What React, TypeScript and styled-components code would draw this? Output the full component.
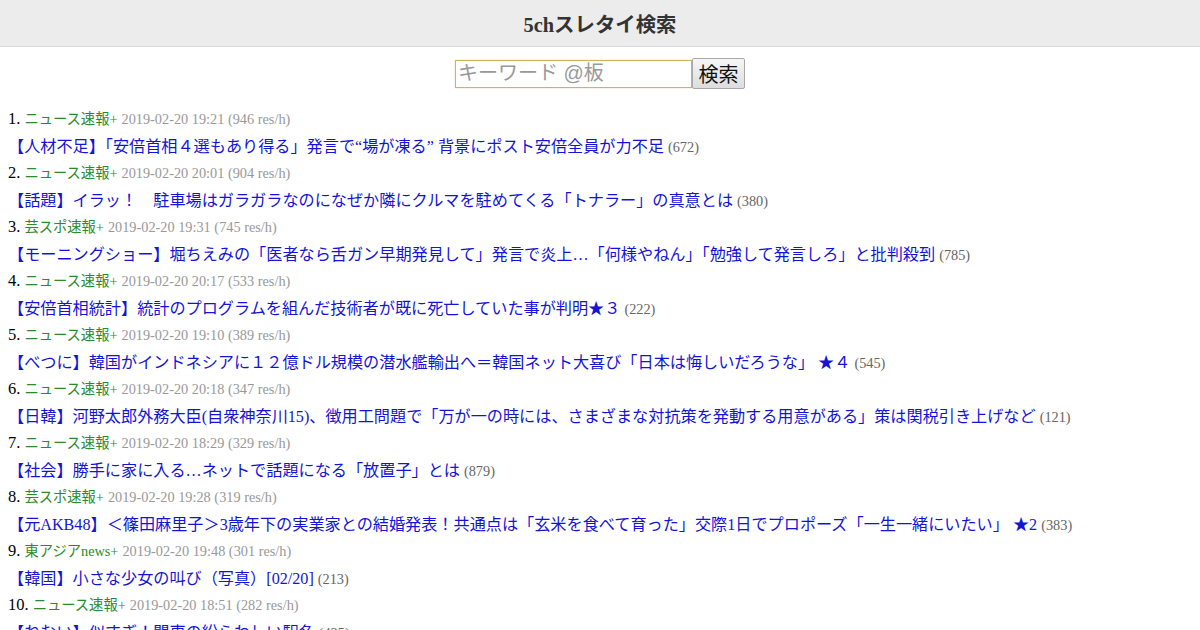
import React from "react";
import styled, { createGlobalStyle } from "styled-components";

const Global = createGlobalStyle`
  html, body { margin: 0; padding: 0; background: #fff; }
  body { font-family: "Liberation Serif", "Noto Sans CJK JP", serif; color: #000; }
`;

const Header = styled.header`
  height: 46px;
  background: #ececec;
  border-bottom: 1px solid #d8d8d8;
  display: flex;
  align-items: center;
  justify-content: center;
`;

const Title = styled.h1`
  margin: 0 0 1px;
  font-size: 20.4px;
  font-weight: bold;
  color: #333;
`;

const SearchForm = styled.form`
  display: flex;
  justify-content: center;
  align-items: center;
  margin-top: 11px;
  height: 31px;
`;

const Input = styled.input`
  box-sizing: border-box;
  width: 237px;
  height: 28px;
  border: 1px solid #d6b05c;
  box-shadow: 0 0 1px #e8c57a;
  padding: 0 2px;
  font-family: "Liberation Sans", "Noto Sans CJK JP", sans-serif;
  font-size: 20px;
  outline: none;
  &::placeholder { color: #999; }
`;

const Button = styled.button`
  box-sizing: border-box;
  height: 31px;
  width: 53px;
  padding: 0;
  border: 1px solid #a8a8a8;
  border-radius: 2px;
  background: linear-gradient(#f6f6f6, #dddddd);
  font-family: "Noto Sans CJK JP", sans-serif;
  font-size: 20px;
  color: #111;
`;

const List = styled.div`
  margin-top: 16px;
  padding-left: 8px;
`;

const Line = styled.div<{ $title?: boolean }>`
  height: ${(p) => (p.$title ? "26px" : "27px")};
  padding-top: ${(p) => (p.$title ? "1px" : "0")};
  line-height: 27px;
  white-space: nowrap;
`;

const Num = styled.span`
  font-size: 16.5px;
`;

const Board = styled.span`
  font-size: 14.3px;
  color: #2b8a2b;
`;

const Meta = styled.span`
  font-size: 14.3px;
  color: #999;
`;

const Link = styled.a`
  font-size: 16.15px;
  color: #1414d8;
  text-decoration: none;
`;

const Count = styled.span`
  font-size: 14.3px;
  color: #666;
`;

const items = [
  ["ニュース速報+", "2019-02-20 19:21", "946", "【人材不足】「安倍首相４選もあり得る」発言で“場が凍る” 背景にポスト安倍全員が力不足", "672"],
  ["ニュース速報+", "2019-02-20 20:01", "904", "【話題】イラッ！　駐車場はガラガラなのになぜか隣にクルマを駐めてくる「トナラー」の真意とは", "380"],
  ["芸スポ速報+", "2019-02-20 19:31", "745", "【モーニングショー】堀ちえみの「医者なら舌ガン早期発見して」発言で炎上…「何様やねん」「勉強して発言しろ」と批判殺到", "785"],
  ["ニュース速報+", "2019-02-20 20:17", "533", "【安倍首相統計】統計のプログラムを組んだ技術者が既に死亡していた事が判明★３", "222"],
  ["ニュース速報+", "2019-02-20 19:10", "389", "【べつに】韓国がインドネシアに１２億ドル規模の潜水艦輸出へ＝韓国ネット大喜び「日本は悔しいだろうな」 ★４", "545"],
  ["ニュース速報+", "2019-02-20 20:18", "347", "【日韓】河野太郎外務大臣(自衆神奈川15)、徴用工問題で「万が一の時には、さまざまな対抗策を発動する用意がある」策は関税引き上げなど", "121"],
  ["ニュース速報+", "2019-02-20 18:29", "329", "【社会】勝手に家に入る…ネットで話題になる「放置子」とは", "879"],
  ["芸スポ速報+", "2019-02-20 19:28", "319", "【元AKB48】＜篠田麻里子＞3歳年下の実業家との結婚発表！共通点は「玄米を食べて育った」交際1日でプロポーズ「一生一緒にいたい」 ★2", "383"],
  ["東アジアnews+", "2019-02-20 19:48", "301", "【韓国】小さな少女の叫び（写真）[02/20]", "213"],
  ["ニュース速報+", "2019-02-20 18:51", "282", "【ねむい】似すぎ！関東の紛らわしい駅名", "435"],
];

export default function App() {
  return (
    <>
      <Global />
      <Header>
        <Title>5chスレタイ検索</Title>
      </Header>
      <SearchForm onSubmit={(e) => e.preventDefault()}>
        <Input placeholder="キーワード @板" />
        <Button type="submit">検索</Button>
      </SearchForm>
      <List>
        {items.map(([board, date, rate, title, count], i) => (
          <React.Fragment key={i}>
            <Line>
              <Num>{i + 1}.</Num> <Board>{board}</Board> <Meta>{date} ({rate} res/h)</Meta>
            </Line>
            <Line $title>
              <Link href="#">{title}</Link> <Count>({count})</Count>
            </Line>
          </React.Fragment>
        ))}
      </List>
    </>
  );
}
